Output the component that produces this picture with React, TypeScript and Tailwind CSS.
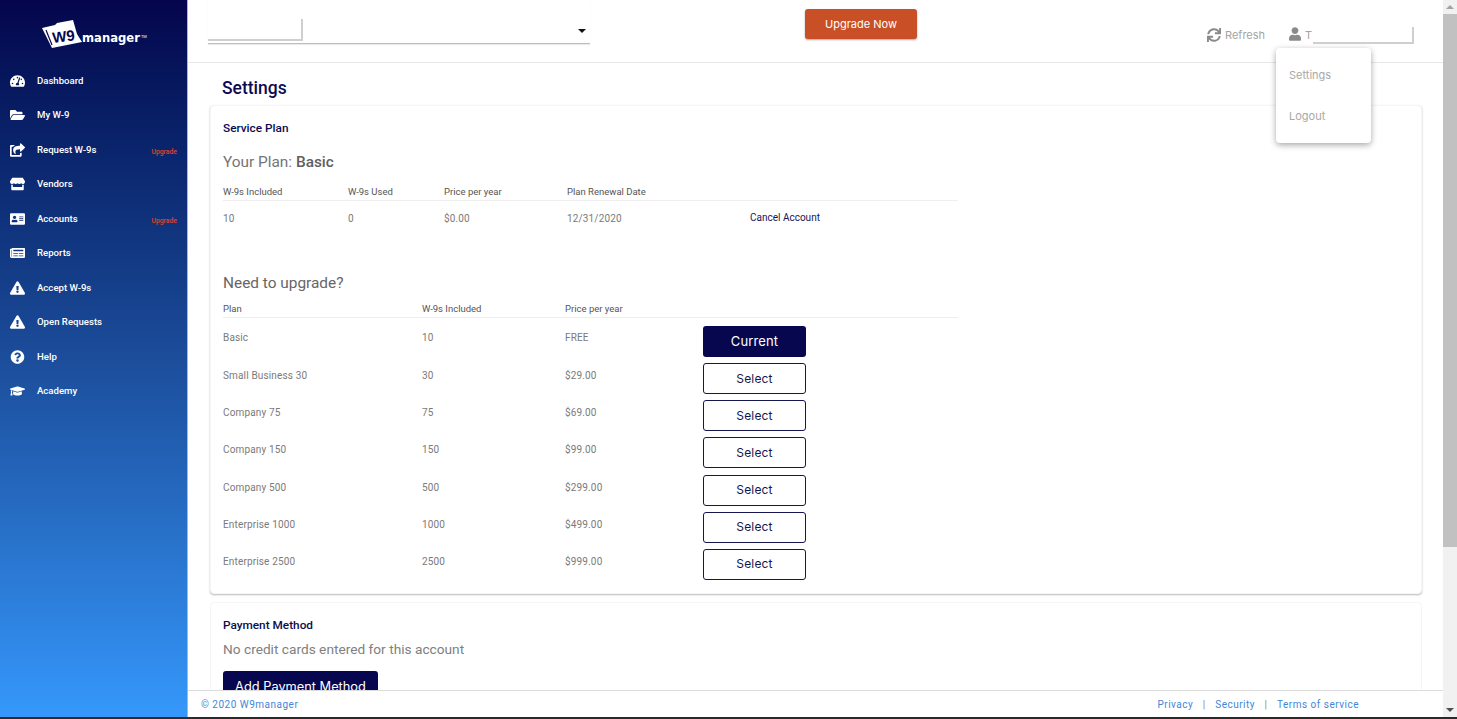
import {
  FaTachometerAlt,
  FaFolderOpen,
  FaShareSquare,
  FaStore,
  FaAddressCard,
  FaNewspaper,
  FaExclamationTriangle,
  FaQuestionCircle,
  FaGraduationCap,
  FaSync,
  FaUser,
} from "react-icons/fa";

const nav = [
  { label: "Dashboard", icon: FaTachometerAlt },
  { label: "My W-9", icon: FaFolderOpen },
  { label: "Request W-9s", icon: FaShareSquare, upgrade: true },
  { label: "Vendors", icon: FaStore },
  { label: "Accounts", icon: FaAddressCard, upgrade: true },
  { label: "Reports", icon: FaNewspaper },
  { label: "Accept W-9s", icon: FaExclamationTriangle },
  { label: "Open Requests", icon: FaExclamationTriangle },
  { label: "Help", icon: FaQuestionCircle },
  { label: "Academy", icon: FaGraduationCap },
];

const plans = [
  { name: "Small Business 30", count: "30", price: "$29.00" },
  { name: "Company 75", count: "75", price: "$69.00" },
  { name: "Company 150", count: "150", price: "$99.00" },
  { name: "Company 500", count: "500", price: "$299.00" },
  { name: "Enterprise 1000", count: "1000", price: "$499.00" },
  { name: "Enterprise 2500", count: "2500", price: "$999.00" },
];

function Logo() {
  return (
    <div className="flex items-start h-[63.5px] pl-[40px] pt-[18px]">
      <svg width="44" height="32" viewBox="0 0 44 32" className="shrink-0">
        <path d="M2 10 L15 7 L17 5 L33 2 L37 16 L42 24 L12 30 Z" fill="#fff" />
        <path d="M6 12 L12 27" stroke="#07074f" strokeWidth="1.2" />
        <text
          x="13"
          y="25"
          transform="rotate(-7 13 25)"
          fill="#07074f"
          className="font-['Liberation_Sans',sans-serif] font-bold text-[15px]"
        >
          W9
        </text>
      </svg>
      <span className="font-['DejaVu_Sans',sans-serif] font-bold text-[11.6px] leading-none text-white -ml-[2px] mt-[15px]">
        manager
      </span>
      <span className="text-[4px] leading-none text-white mt-[17px] ml-[1px]">TM</span>
    </div>
  );
}

function Sidebar() {
  return (
    <aside className="w-[188px] shrink-0 border-r border-[#9db7ee] bg-gradient-to-b from-[#05054c] via-[#1c4d9b] via-50% to-[#3598fb] font-['Roboto',sans-serif]">
      <Logo />
      <nav>
        {nav.map(({ label, icon: Icon, upgrade }) => (
          <div key={label} className="flex items-center h-[34.5px] pl-[10px] pr-[10px] text-white">
            <span className="w-[27px] shrink-0">
              <Icon className="w-[15px] h-[14px]" />
            </span>
            <span className="flex-1 text-[9.6px] font-medium">{label}</span>
            {upgrade && (
              <span className="text-[6.8px] font-medium text-[#e0442c] mt-[5px]">Upgrade</span>
            )}
          </div>
        ))}
      </nav>
    </aside>
  );
}

function Header() {
  return (
    <header className="h-[63px] shrink-0 border-b border-[#e8e8e8] flex items-start pl-[20px] bg-white">
      <div className="relative w-[382px] h-[44px] border-b border-[#bdbdbd] shadow-[0_1px_1px_rgba(0,0,0,0.08)] flex justify-end">
        <div className="w-[95px] h-[41px] absolute left-0 top-0 flex justify-end">
          <div className="w-full mt-[19px] h-[22px] border-r-2 border-b-2 border-[#cfcfcf]" />
        </div>
        <span className="mt-[29px] mr-[4px] w-0 h-0 border-x-[4px] border-x-transparent border-t-[4px] border-t-[#111]" />
      </div>
      <button className="ml-[215px] mt-[9px] w-[112px] h-[30px] rounded-[3px] bg-[#c94f26] text-white text-[11px] font-['Inter',sans-serif] shadow-[0_1px_2px_rgba(0,0,0,0.35)]">
        Upgrade Now
      </button>
      <div className="ml-[290px] mt-[27px] flex items-center text-[#a4a4a4] font-['Inter',sans-serif] text-[11px]">
        <FaSync className="w-[14px] h-[14px] text-[#8a8a8a]" />
        <span className="ml-[4px]">Refresh</span>
      </div>
      <div className="ml-[24px] mt-[27px] flex items-start text-[#a4a4a4] font-['Inter',sans-serif] text-[11px]">
        <FaUser className="w-[12px] h-[14px] text-[#8a8a8a]" />
        <span className="ml-[4px]">T</span>
        <div className="ml-[1px] w-[101px] h-[17px] border-r-2 border-b-2 border-[#cfcfcf]" />
      </div>
    </header>
  );
}

function Card({ children, className }: { children: React.ReactNode; className: string }) {
  return (
    <section
      className={`mr-[21px] bg-white border border-[#f6f6f6] rounded-[4px] pl-[12px] ${className}`}
    >
      {children}
    </section>
  );
}

function Main() {
  return (
    <main className="flex-1 min-h-0 overflow-hidden pl-[22px] font-['Roboto',sans-serif] bg-white">
      <h1 className="ml-[12px] mt-[13px] h-[25px] text-[17.5px] leading-[25px] font-medium text-[#0b0b50]">
        Settings
      </h1>
      <div className="mt-[4px]">
        <Card className="h-[489px] shadow-[0_1px_2px_rgba(0,0,0,0.28)]">
          <h2 className="pt-[14px] text-[11.8px] leading-[16px] font-medium text-[#0b0b50]">
            Service Plan
          </h2>
          <p className="mt-[15px] text-[15.4px] leading-[22px] text-[#757575]">
            Your Plan: <span className="font-medium text-[#5f5f5f]">Basic</span>
          </p>
          <div className="mt-[11px] w-[735px] grid grid-cols-[125px_96px_123px_183px_1fr] h-[17px] border-b border-[#eeeeee] text-[9.5px] leading-[16px] text-[#555555]">
            <span>W-9s Included</span>
            <span>W-9s Used</span>
            <span>Price per year</span>
            <span>Plan Renewal Date</span>
          </div>
          <div className="w-[735px] grid grid-cols-[125px_96px_123px_183px_1fr] pt-[9px] text-[10px] leading-[18px] text-[#7a7a7a] tracking-[0.15px]">
            <span>10</span>
            <span>0</span>
            <span>$0.00</span>
            <span>12/31/2020</span>
            <span className="text-[#16165a] -mt-[1px] tracking-normal text-[10px]">Cancel Account</span>
          </div>
          <p className="mt-[44px] text-[15.4px] leading-[22px] text-[#666666]">Need to upgrade?</p>
          <div className="mt-[7px] w-[735px] grid grid-cols-[199px_143px_138px] h-[17px] border-b border-[#eeeeee] text-[9.5px] leading-[16px] text-[#555555]">
            <span>Plan</span>
            <span>W-9s Included</span>
            <span>Price per year</span>
          </div>
          <div className="grid grid-cols-[199px_143px_138px_103px] mt-[8px] h-[31px] text-[10px] leading-[23px] text-[#7a7a7a] tracking-[0.15px]">
            <span>Basic</span>
            <span>10</span>
            <span>FREE</span>
            <button className="h-[31px] rounded-[3px] bg-[#07074f] text-white text-[13px] font-['Inter',sans-serif]">
              Current
            </button>
          </div>
          {plans.map((p) => (
            <div
              key={p.name}
              className="grid grid-cols-[199px_143px_138px_103px] mt-[6.15px] h-[31px] text-[10px] leading-[26px] text-[#7a7a7a] tracking-[0.15px]"
            >
              <span>{p.name}</span>
              <span>{p.count}</span>
              <span>{p.price}</span>
              <button className="h-[31px] rounded-[3px] border border-[#16164f] bg-white text-[#16164f] text-[12px] font-['Inter',sans-serif]">
                Select
              </button>
            </div>
          ))}
        </Card>
        <Card className="mt-[8px] h-[120px]">
          <h2 className="pt-[14px] text-[11.8px] leading-[16px] font-medium text-[#0b0b50]">
            Payment Method
          </h2>
          <p className="mt-[6px] text-[13.7px] leading-[20px] text-[#808080]">
            No credit cards entered for this account
          </p>
          <button className="mt-[12px] w-[155px] h-[32px] rounded-[3px] bg-[#07074f] text-white text-[12.8px] font-['Inter',sans-serif]">
            Add Payment Method
          </button>
        </Card>
      </div>
    </main>
  );
}

function Footer() {
  return (
    <footer className="h-[27px] shrink-0 border-t border-[#dddddd] bg-white flex items-center pl-[13px] pr-[84px] text-[10px] text-[#3f87d8] tracking-[0.5px] font-['Roboto',sans-serif]">
      <span className="flex-1">© 2020 W9manager</span>
      <span>Privacy</span>
      <span className="mx-[9.5px] text-[#888888]">|</span>
      <span>Security</span>
      <span className="mx-[9.5px] text-[#888888]">|</span>
      <span>Terms of service</span>
    </footer>
  );
}

function Scrollbar() {
  return (
    <div className="w-[14px] shrink-0 bg-[#f1f1f1] flex flex-col items-center">
      <div className="h-[14px] flex items-center justify-center">
        <span className="w-0 h-0 border-x-[4px] border-x-transparent border-b-[4px] border-b-[#a3a3a3]" />
      </div>
      <div className="w-full h-[533px] bg-[#c1c1c1]" />
      <div className="flex-1" />
      <div className="h-[14px] flex items-center justify-center">
        <span className="w-0 h-0 border-x-[4px] border-x-transparent border-t-[4px] border-t-[#505050]" />
      </div>
    </div>
  );
}

export default function App() {
  return (
    <div className="relative h-[719px] w-[1457px] overflow-hidden flex flex-col bg-white">
      <div className="flex-1 min-h-0 flex">
        <Sidebar />
        <div className="flex-1 min-w-0 flex flex-col">
          <Header />
          <Main />
          <Footer />
        </div>
        <Scrollbar />
      </div>
      <div className="h-[2px] shrink-0 bg-[#2a2a2a]" />
      {/* user dropdown */}
      <div className="absolute left-[1276px] top-[48px] w-[95px] h-[95px] rounded-[4px] bg-white shadow-[0_2px_6px_rgba(0,0,0,0.35)] pl-[13px] font-['Inter',sans-serif] text-[11px] text-[#a8a8a8]">
        <p className="mt-[19px] leading-[16px]">Settings</p>
        <p className="mt-[25px] leading-[16px]">Logout</p>
      </div>
    </div>
  );
}
